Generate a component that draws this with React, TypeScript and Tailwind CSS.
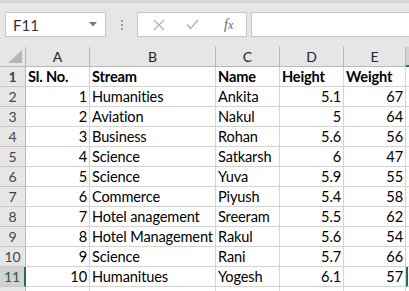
import { FC } from "react";

type Row = {
  no: string;
  stream: string;
  name: string;
  height: string;
  weight: string;
};

const rows: Row[] = [
  { no: "1", stream: "Humanities", name: "Ankita", height: "5.1", weight: "67" },
  { no: "2", stream: "Aviation", name: "Nakul", height: "5", weight: "64" },
  { no: "3", stream: "Business", name: "Rohan", height: "5.6", weight: "56" },
  { no: "4", stream: "Science", name: "Satkarsh", height: "6", weight: "47" },
  { no: "5", stream: "Science", name: "Yuva", height: "5.9", weight: "55" },
  { no: "6", stream: "Commerce", name: "Piyush", height: "5.4", weight: "58" },
  { no: "7", stream: "Hotel anagement", name: "Sreeram", height: "5.5", weight: "62" },
  { no: "8", stream: "Hotel Management", name: "Rakul", height: "5.6", weight: "54" },
  { no: "9", stream: "Science", name: "Rani", height: "5.7", weight: "66" },
  { no: "10", stream: "Humanitues", name: "Yogesh", height: "6.1", weight: "57" },
];

const cell =
  "h-full shrink-0 border-r border-b border-[#d4d4d4] px-[2px] flex items-end pb-[1px] overflow-hidden whitespace-nowrap leading-[17px]";

const RowHead: FC<{ n?: number; active?: boolean }> = ({ n, active }) => (
  <div
    className={`h-full w-[26px] shrink-0 border-b border-[#c8c8c8] flex items-center justify-center text-[14px] leading-[16px] ${
      active
        ? "bg-[#d2d2d2] text-[#2c5a3f] border-r-2 border-r-[#217346]"
        : "bg-[#e6e6e6] text-[#444] border-r border-r-[#b8b8b8]"
    }`}
  >
    {n}
  </div>
);

const ColHead: FC<{ label: string; w: string }> = ({ label, w }) => (
  <div
    className={`${w} h-full shrink-0 border-r border-b border-[#b8b8b8] flex items-center justify-center text-[14px] leading-[16px] text-[#222]`}
  >
    {label}
  </div>
);

export default function App() {
  return (
    <div
      className="w-[409px] h-[291px] overflow-hidden bg-[#e6e6e6] text-black"
      style={{ fontFamily: "Lato, 'Open Sans', sans-serif" }}
    >
      {/* formula bar */}
      <div className="h-[47px] bg-[#e6e6e6] border-t-[3px] border-[#d6d6d6] flex items-start pt-[9px] pl-[5px]">
        <div className="w-[101px] h-[25px] bg-white border border-[#c6c6c6] flex items-center justify-between pl-[7px] pr-[8px]">
          <span className="text-[15px] leading-[18px] text-[#333]">F11</span>
          <svg width="8" height="5" viewBox="0 0 8 5">
            <path d="M0 0 L8 0 L4 4.5 Z" fill="#7a7a7a" />
          </svg>
        </div>
        <div className="w-[31px] h-[25px] flex flex-col items-center justify-center gap-[2px]">
          <span className="w-[2px] h-[2px] bg-[#9a9a9a]" />
          <span className="w-[2px] h-[2px] bg-[#9a9a9a]" />
          <span className="w-[2px] h-[2px] bg-[#9a9a9a]" />
        </div>
        <div className="w-[110px] h-[25px] bg-white border border-[#c6c6c6] flex items-center">
          <svg width="12" height="12" viewBox="0 0 12 12" className="ml-[15px]">
            <path d="M1 1 L11 11 M11 1 L1 11" stroke="#b4b4b4" strokeWidth="1.3" />
          </svg>
          <svg width="13" height="11" viewBox="0 0 13 11" className="ml-[21px]">
            <path d="M1 5.5 L4.5 9.5 L12 1" stroke="#b4b4b4" strokeWidth="1.5" fill="none" />
          </svg>
          <span
            className="ml-[25px] text-[14px] leading-[16px] italic text-[#666]"
            style={{ fontFamily: "'Liberation Serif', serif" }}
          >
            f<span className="text-[12px]">x</span>
          </span>
        </div>
        <div className="ml-[4px] flex-1 h-[25px] bg-white border border-[#c6c6c6] border-r-0" />
      </div>

      {/* column headers */}
      <div className="h-[20px] flex">
        <div className="w-[26px] h-full shrink-0 border-r border-b border-[#b8b8b8] relative">
          <svg width="14" height="13" viewBox="0 0 14 13" className="absolute right-[3px] bottom-[3px]">
            <path d="M14 0 L14 13 L0 13 Z" fill="#b6b6b6" />
          </svg>
        </div>
        <ColHead label="A" w="w-[64px]" />
        <ColHead label="B" w="w-[126px]" />
        <ColHead label="C" w="w-[64px]" />
        <ColHead label="D" w="w-[64px]" />
        <ColHead label="E" w="w-[62px]" />
        <div className="w-[40px] h-full shrink-0 bg-[#d2d2d2] border-b-2 border-[#217346]" />
      </div>

      {/* header row */}
      <div className="h-[20px] flex text-[14.6px] tracking-[-0.15px] font-bold">
        <RowHead n={1} />
        <div className={`${cell} w-[64px] bg-white`}>Sl. No.</div>
        <div className={`${cell} w-[126px] bg-white`}>Stream</div>
        <div className={`${cell} w-[64px] bg-white`}>Name</div>
        <div className={`${cell} w-[64px] bg-white`}>Height</div>
        <div className={`${cell} w-[62px] bg-white`}>Weight</div>
        <div className={`${cell} w-[40px] bg-white`} />
      </div>

      {rows.map((r, i) => {
        const active = i === rows.length - 1;
        return (
          <div key={r.no} className="h-[20px] flex text-[14.6px] tracking-[-0.15px]">
            <RowHead n={i + 2} active={active} />
            <div className={`${cell} w-[64px] bg-white justify-end`}>{r.no}</div>
            <div className={`${cell} w-[126px] bg-white`}>{r.stream}</div>
            <div className={`${cell} w-[64px] bg-white`}>{r.name}</div>
            <div className={`${cell} w-[64px] bg-white justify-end`}>{r.height}</div>
            <div className={`${cell} w-[62px] bg-white justify-end`}>{r.weight}</div>
            <div
              className={`${cell} w-[40px] bg-white ${
                active ? "border-l-2 border-l-[#217346]" : ""
              }`}
            />
          </div>
        );
      })}

      {/* row 12, only its top edge is in view */}
      <div className="h-[20px] flex">
        <RowHead />
        <div className={`${cell} w-[64px] bg-white`} />
        <div className={`${cell} w-[126px] bg-white`} />
        <div className={`${cell} w-[64px] bg-white`} />
        <div className={`${cell} w-[64px] bg-white`} />
        <div className={`${cell} w-[62px] bg-white`} />
        <div className={`${cell} w-[40px] bg-white`} />
      </div>
    </div>
  );
}
